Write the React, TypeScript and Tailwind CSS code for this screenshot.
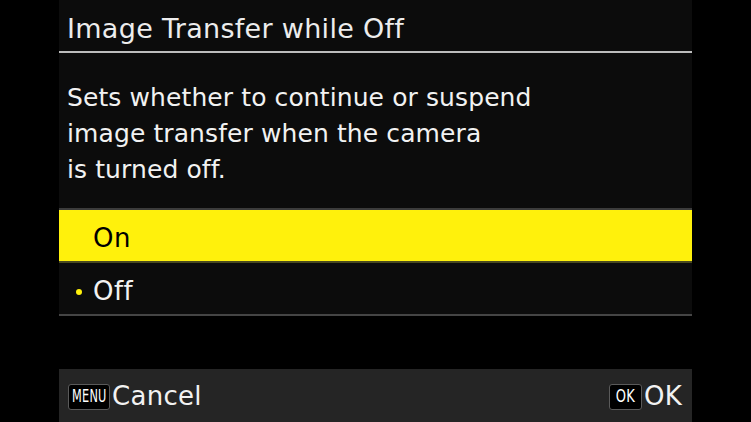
const font = {
  fontFamily: '"DejaVu Sans", "Liberation Sans", sans-serif',
  fontVariantLigatures: 'none' as const,
};

function KeyBadge({ label, wide }: { label: string; wide?: boolean }) {
  return (
    <span
      className={`flex h-[26px] items-center justify-center rounded-[3px] border border-[#5a5a5a] bg-black text-white ${
        wide ? 'w-[42px]' : 'w-[33px]'
      }`}
    >
      <span
        className={`inline-block text-[17px] leading-none ${wide ? 'scale-x-[0.74]' : 'scale-x-[0.85]'}`}
        style={{ fontFamily: '"DejaVu Sans Condensed", "DejaVu Sans", sans-serif' }}
      >
        {label}
      </span>
    </span>
  );
}

export default function App() {
  const options = [
    { label: 'On', active: true, current: false },
    { label: 'Off', active: false, current: true },
  ];

  return (
    <div className="flex h-[422px] w-[751px] bg-black" style={font}>
      <div className="ml-[59px] flex w-[633px] flex-col">
        {/* Main panel */}
        <div className="h-[316px] bg-[#0c0c0c]">
          <div className="h-[53px] border-b-2 border-[#bdbdbd] px-[8px] pt-[11px] text-[27px] leading-[36px] tracking-[0.3px] text-[#ededed]">
            Image Transfer while Off
          </div>
          <p className="mt-[27px] h-[128px] px-[8px] text-[25px] leading-[36px] tracking-[0.1px] text-[#f2f2f2]">
            Sets whether to continue or suspend
            <br />
            image transfer when the camera
            <br />
            is turned off.
          </p>
          <div className="border-t-2 border-[#3c3c3c]">
            {options.map(o => (
              <div
                key={o.label}
                className={`flex h-[53px] items-center border-b-2 pt-[6px] text-[26px] tracking-[0.5px] ${
                  o.active ? 'border-[#4a4a20] bg-[#fff10c] text-black' : 'border-[#454545] text-[#f2f2f2]'
                }`}
              >
                <span className="flex w-[34px] justify-end pr-[11px]">
                  {o.current && <span className="h-[6px] w-[6px] rounded-full bg-[#fff10c]" />}
                </span>
                {o.label}
              </div>
            ))}
          </div>
        </div>

        <div className="flex-1" />

        {/* Bottom bar */}
        <div className="flex h-[53px] items-center justify-between bg-[#252525] pl-[9px] pr-[10px] pt-[2px] text-[26px] tracking-[0.3px] text-[#f2f2f2]">
          <div className="flex items-center gap-[2px]">
            <KeyBadge label="MENU" wide />
            <span>Cancel</span>
          </div>
          <div className="flex items-center gap-[2px]">
            <KeyBadge label="OK" />
            <span>OK</span>
          </div>
        </div>
      </div>
    </div>
  );
}
